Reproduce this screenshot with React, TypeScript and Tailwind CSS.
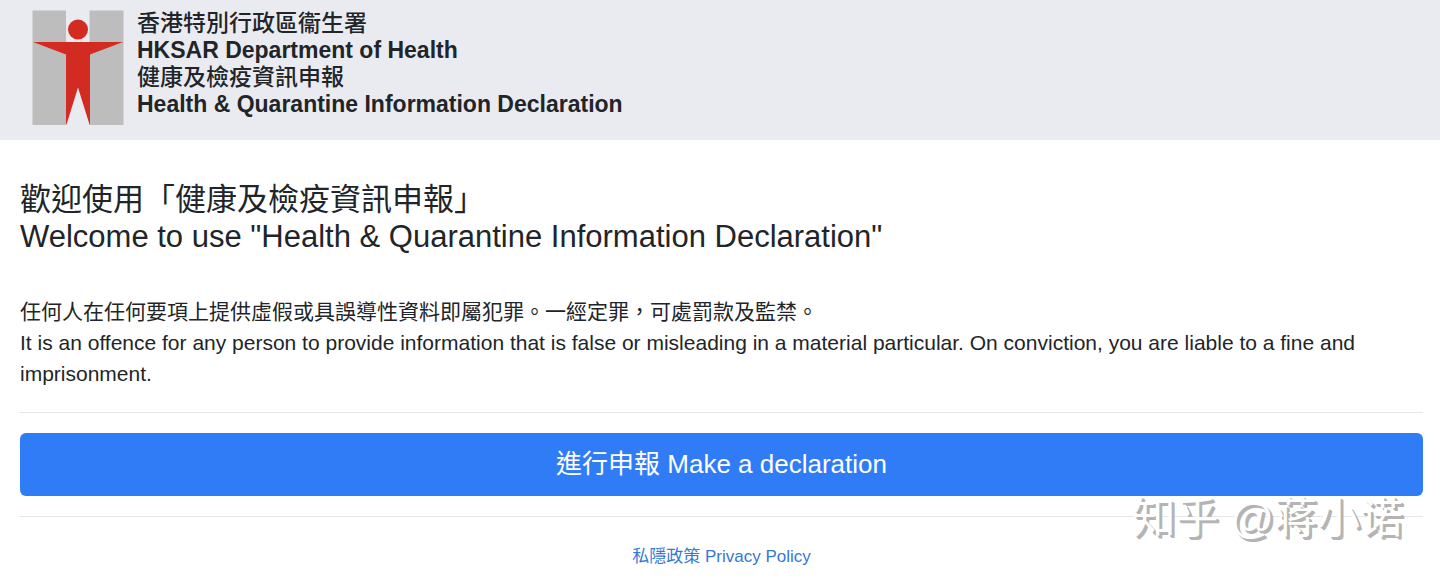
import React from "react";

const Logo = () => (
    <svg viewBox="0 0 92 115" className="h-[115px] w-[92px] shrink-0" role="img" aria-label="Department of Health">
        <rect x="0.5" y="0.5" width="33.5" height="114.5" fill="#bdbdbd" />
        <rect x="57.5" y="0.5" width="34" height="114.5" fill="#bdbdbd" />
        <circle cx="46" cy="19.5" r="10" fill="#d12b22" />
        <path
            d="M1 32H91L58 44.5V114.5H57.5L46 77.5L34.5 114.5H34V44.5Z"
            fill="#d12b22"
        />
    </svg>
);

const Header = () => (
    <header className="flex gap-[13px] border-b border-[#e9eced] bg-[#eaebf0] px-8 pt-[10px] pb-[14px]">
        <Logo />
        <div className="text-[23px] leading-[27px] font-bold">
            <p className="font-medium">香港特別行政區衞生署</p>
            <p>HKSAR Department of Health</p>
            <p className="font-medium">健康及檢疫資訊申報</p>
            <p>Health &amp; Quarantine Information Declaration</p>
        </div>
    </header>
);

const Watermark = () => (
    <div className="pointer-events-none absolute right-[37px] bottom-[31px] font-['Liberation_Sans','Noto_Sans_CJK_SC',sans-serif] text-[43px] leading-[60px] text-white [text-shadow:2px_2px_0_#b4b4b4,3px_3px_0_#b4b4b4]">
        知乎 @蒋小诺
    </div>
);

export default function App()
{
    return (
        <div className="relative bg-white pb-[10px] font-['Liberation_Sans','Noto_Sans_CJK_TC',sans-serif] text-[#212529]">
            <Header />
            <main className="pr-[17px] pl-5">
                <h1 className="pt-[41px] text-[31px] leading-[37px]">
                    歡迎使用「健康及檢疫資訊申報」
                    <br />
                    Welcome to use "Health &amp; Quarantine Information Declaration"
                </h1>
                <p className="pt-[41px] pb-[3px] text-[21px] leading-[31px]">
                    任何人在任何要項上提供虛假或具誤導性資料即屬犯罪。一經定罪，可處罰款及監禁。
                    <br />
                    It is an offence for any person to provide information that is false or misleading in a material particular. On conviction, you are liable to a fine and imprisonment.
                </p>
                <hr className="my-5 border-[#e6e6e6]" />
                <button
                    type="button"
                    className="block w-full rounded-md bg-[#307cf6] py-3 text-[26px] leading-[39px] text-white"
                >
                    進行申報 Make a declaration
                </button>
                <hr className="my-5 border-[#e6e6e6]" />
            </main>
            <footer className="pt-2 pr-[17px] pl-5 text-center text-[17px] leading-6">
                <a href="#privacy" className="text-[#3678d6]">
                    私隱政策 Privacy Policy
                </a>
            </footer>
            <Watermark />
        </div>
    );
}
